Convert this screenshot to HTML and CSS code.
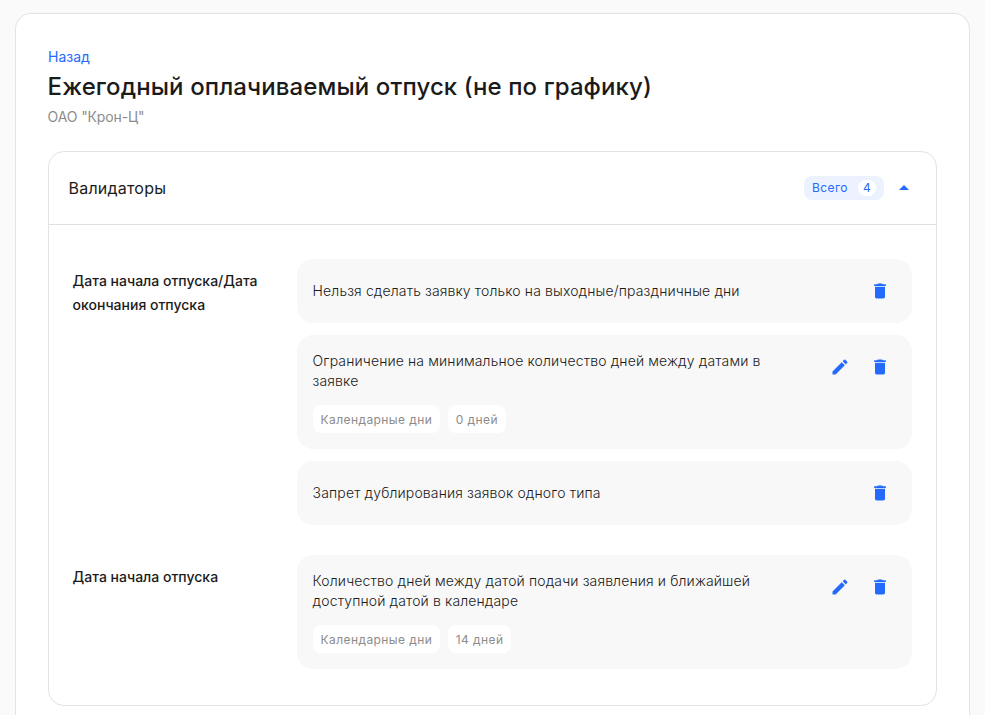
FILE: index.html
```html
<!DOCTYPE html>
<html lang="ru">
<head>
<meta charset="utf-8">
<title>Ежегодный оплачиваемый отпуск</title>
<link rel="stylesheet" href="styles.css">
</head>
<body>
<svg class="defs" width="0" height="0">
  <symbol id="trash" viewBox="0 0 24 24"><path d="M6 19c0 1.1.9 2 2 2h8c1.1 0 2-.9 2-2V7H6v12zM19 4h-3.500l-1-1h-5l-1 1H5v2h14V4z"/></symbol>
  <symbol id="pencil" viewBox="0 0 24 24"><path d="M3 17.250V21h3.750L17.810 9.940l-3.750-3.750L3 17.250zM20.710 7.040a1 1 0 0 0 0-1.410l-2.340-2.340a1 1 0 0 0-1.410 0l-1.830 1.830 3.750 3.750 1.830-1.830z"/></symbol>
</svg>
<main class="page">
  <a class="back">Назад</a>
  <h1>Ежегодный оплачиваемый отпуск (не по графику)</h1>
  <p class="company">ОАО "Крон-Ц"</p>
  <section class="panel">
    <header class="panel-head">
      <h2>Валидаторы</h2>
      <div class="total">Всего <span class="count">4</span></div>
      <svg class="caret" viewBox="0 0 10 5"><path d="M0 5L5 0l5 5z"/></svg>
    </header>
    <div class="groups">
      <div class="group">
        <h3>Дата начала отпуска/Дата окончания отпуска</h3>
        <div class="rules">
          <div class="rule simple">
            <div class="text"><p>Нельзя сделать заявку только на выходные/праздничные дни</p></div>
            <div class="actions"><svg><use href="#trash"/></svg></div>
          </div>
          <div class="rule">
            <div class="text"><p>Ограничение на минимальное количество дней между датами в заявке</p>
              <div class="tags"><span>Календарные дни</span><span>0 дней</span></div></div>
            <div class="actions"><svg><use href="#pencil"/></svg><svg><use href="#trash"/></svg></div>
          </div>
          <div class="rule simple">
            <div class="text"><p>Запрет дублирования заявок одного типа</p></div>
            <div class="actions"><svg><use href="#trash"/></svg></div>
          </div>
        </div>
      </div>
      <div class="group">
        <h3>Дата начала отпуска</h3>
        <div class="rules">
          <div class="rule">
            <div class="text"><p>Количество дней между датой подачи заявления и ближайшей доступной датой в календаре</p>
              <div class="tags"><span>Календарные дни</span><span>14 дней</span></div></div>
            <div class="actions"><svg><use href="#pencil"/></svg><svg><use href="#trash"/></svg></div>
          </div>
        </div>
      </div>
    </div>
  </section>
</main>
</body>
</html>
```
FILE: styles.css
```css
* { box-sizing: border-box; }
body { margin: 0; height: 715px; padding: 13px 15px 0; background: #fafafa; color: #1b1b1b; font-family: Inter, "Liberation Sans", sans-serif; }
h1, h2, h3, p { margin: 0; }
.defs { position: absolute; }
.page { height: 702px; padding: 33px 32px 0; background: #fff; border: 1px solid #e2e3e6; border-bottom: 0; border-radius: 16px 16px 0 0; }
.back { display: block; font-size: 14px; line-height: 20px; color: #246bfd; font-weight: 370; }
h1 { margin-top: 4px; font-size: 24px; line-height: 32px; font-weight: 550; letter-spacing: .11px; text-indent: -.4px; white-space: nowrap; }
.company { margin-top: 4px; font-size: 14px; line-height: 20px; color: #8c8c8c; font-weight: 370; letter-spacing: -.13px; text-indent: -.4px; }
.panel { height: 555px; margin-top: 24px; border: 1px solid #e2e3e6; border-radius: 16px; }
.panel-head { display: flex; align-items: center; height: 73px; padding: 0 27px 0 20px; border-bottom: 1px solid #e0e0e0; }
h2 { margin-right: auto; font-size: 16px; line-height: 24px; font-weight: 400; letter-spacing: .2px; text-indent: -.4px; }
.total { display: flex; align-items: center; justify-content: space-between; width: 80px; height: 24px; padding: 0 8px; border-radius: 8px; background: #ecf2ff; color: #246bfd; font-size: 12px; line-height: 16px; letter-spacing: .4px; font-weight: 370; }
.count { width: 18px; height: 16px; border-radius: 8px; background: #fff; text-align: center; }
.caret { width: 10px; height: 5px; margin: 0 0 1px 15px; fill: #246bfd; }
.groups { display: flex; flex-direction: column; gap: 30px; padding: 34px 24px 0; }
.group { display: flex; }
h3 { width: 224px; padding: 10px 20px 0 0; margin-left: -.4px; margin-right: .4px; font-size: 14px; line-height: 24px; font-weight: 550; }
.rules { flex: 1; display: flex; flex-direction: column; gap: 12px; }
.rule { display: flex; justify-content: space-between; height: 114px; padding: 16px 22px 16px 16px; border-radius: 16px; background: #f8f8f8; }
.simple { height: 64px; align-items: center; padding-top: 0; padding-bottom: 0; }
.text { width: 465px; font-size: 14px; line-height: 20px; font-weight: 350; letter-spacing: .13px; }
.text p { margin-left: -.4px; }
.tags { display: flex; gap: 8px; margin-top: 14px; }
.tags span { padding: 1px 8px 0; text-indent: -.4px; height: 28px; border-radius: 8px; background: #fff; color: #8c8c8c; font-size: 12px; font-weight: 390; line-height: 28px; letter-spacing: .41px; }
.actions { display: flex; gap: 20px; height: 20px; margin-top: 6px; }
.simple .actions { margin-top: 0; }
.actions svg { width: 20px; height: 20px; fill: #246bfd; }
```
